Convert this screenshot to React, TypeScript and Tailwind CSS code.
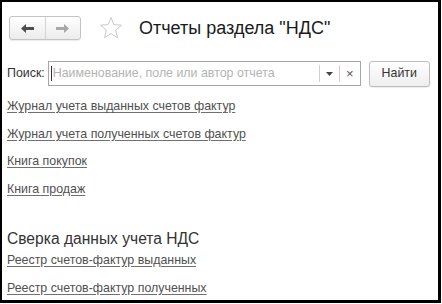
import React from "react";

const font = { fontFamily: '"Liberation Sans", Arial, sans-serif' };

function Arrow({ dir, color }: { dir: "left" | "right"; color: string }) {
  return (
    <svg width="13" height="9" viewBox="0 0 13 9" style={{ transform: dir === "right" ? "scaleX(-1)" : undefined }}>
      <path d="M0 4.5 L5 0 L5 3 L13 3 L13 6 L5 6 L5 9 Z" fill={color} />
    </svg>
  );
}

function Star() {
  return (
    <svg width="24" height="24" viewBox="0 0 24 24">
      <path
        d="M12 1.5 L14.8 8.6 L22.5 9.2 L16.6 14.1 L18.5 21.8 L12 17.6 L5.5 21.8 L7.4 14.1 L1.5 9.2 L9.2 8.6 Z"
        fill="none"
        stroke="#c9c9c9"
        strokeWidth="1"
        strokeLinejoin="miter"
      />
    </svg>
  );
}

function Link({ children }: { children: React.ReactNode }) {
  return (
    <a className="text-[12.4px] leading-[16px] text-[#505050] underline decoration-[#707070] underline-offset-[2px] w-fit cursor-pointer">
      {children}
    </a>
  );
}

export default function App() {
  return (
    <div className="w-[442px] h-[304px] bg-white" style={font}>
      <div className="w-[441px] h-[303px] border-l-2 border-t-2 border-r-[3px] border-b-[3px] border-black flex flex-col pl-[5px]">
        {/* header */}
        <div className="flex items-center mt-[14px] h-[24px]">
          <div className="ml-[2px] flex h-[24px] w-[72px] rounded-[3px] border border-[#c4c4c4] bg-gradient-to-b from-white to-[#ececec] shadow-[0_1px_1px_rgba(0,0,0,0.08)]">
            <div className="flex-1 flex items-center justify-center border-r border-[#d4d4d4]">
              <Arrow dir="left" color="#4d4d4d" />
            </div>
            <div className="flex-1 flex items-center justify-center">
              <Arrow dir="right" color="#a8a8a8" />
            </div>
          </div>
          <div className="ml-[18px] flex items-center">
            <Star />
          </div>
          <div className="ml-[16px] text-[18px] leading-[20px] text-[#1a1a1a]">Отчеты раздела "НДС"</div>
        </div>

        {/* search */}
        <div className="flex items-center mt-[21px] h-[25px]">
          <span className="text-[12.4px] text-[#333]">Поиск:</span>
          <div className="ml-[3px] flex h-[25px] w-[313px] items-center border border-[#a6a6a6] bg-white">
            <div className="ml-[2px] h-[15px] w-px bg-[#333]" />
            <span className="ml-[1px] flex-1 text-[12.4px] text-[#b3b3b3] whitespace-nowrap overflow-hidden">
              Наименование, поле или автор отчета
            </span>
            <div className="h-[17px] w-px bg-[#d0d0d0]" />
            <div className="w-[19px] flex items-center justify-center">
              <svg width="7" height="4" viewBox="0 0 7 4">
                <path d="M0 0 L7 0 L3.5 4 Z" fill="#444" />
              </svg>
            </div>
            <div className="h-[17px] w-px bg-[#d0d0d0]" />
            <div className="w-[20px] flex items-center justify-center text-[13px] text-[#555] leading-none">×</div>
          </div>
          <div className="ml-[8px] flex h-[26px] w-[61px] items-center justify-center rounded-[3px] border border-[#bdbdbd] bg-gradient-to-b from-white to-[#eeeeee] text-[12.4px] text-[#333] shadow-[0_1px_1px_rgba(0,0,0,0.08)]">
            Найти
          </div>
        </div>

        {/* links */}
        <div className="flex flex-col gap-[11.5px] mt-[12px]">
          <Link>Журнал учета выданных счетов фактур</Link>
          <Link>Журнал учета полученных счетов фактур</Link>
          <Link>Книга покупок</Link>
          <Link>Книга продаж</Link>
        </div>

        <div className="mt-[33px] text-[15.6px] leading-[18px] text-[#333]">Сверка данных учета НДС</div>
        <div className="flex flex-col gap-[12px] mt-[4px]">
          <Link>Реестр счетов-фактур выданных</Link>
          <Link>Реестр счетов-фактур полученных</Link>
        </div>
      </div>
    </div>
  );
}
